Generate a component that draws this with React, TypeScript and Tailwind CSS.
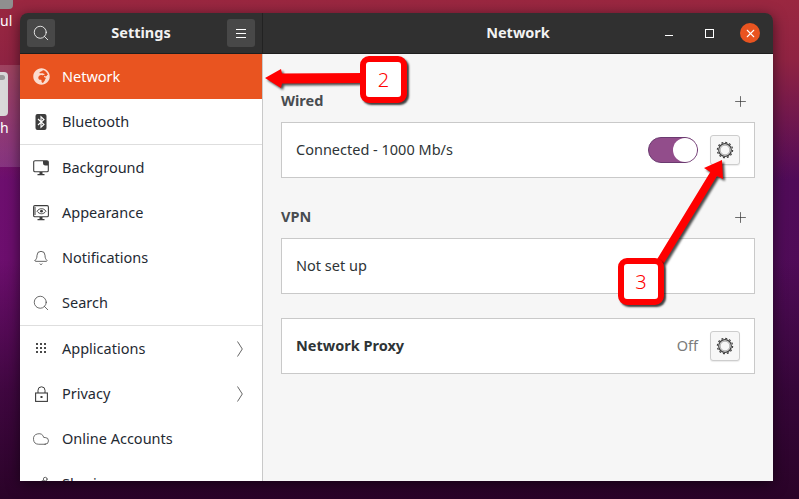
import { Bell, Cloud, Search, Share2, Plus, X } from 'lucide-react'
import { FaGlobeAfrica } from 'react-icons/fa'
import type { ReactNode } from 'react'

function BluetoothIcon() {
  return (
    <svg width="16" height="16" viewBox="0 0 16 16">
      <rect x="2.5" y="0" width="11" height="16" rx="2" fill="#3d3d3d" />
      <path d="M5 5l6 5.5L8 13.2V2.8l3 2.7L5 11" fill="none" stroke="#fff" strokeWidth="1.1" />
    </svg>
  )
}

function BackgroundIcon() {
  return (
    <svg width="16" height="16" viewBox="0 0 16 16">
      <path d="M2 .7h12A1.3 1.3 0 0 1 15.3 2v8.5a1.3 1.3 0 0 1-1.3 1.3H2A1.3 1.3 0 0 1 .7 10.5V2A1.3 1.3 0 0 1 2 .7z" fill="none" stroke="#3d3d3d" strokeWidth="1.1" />
      <path d="M10 1h4.5a.8.8 0 0 1 .8.8v3.7h-3a2.3 2.3 0 0 1-2.300-2.300z" fill="#3d3d3d" />
      <path d="M6.5 12h3v2h-3zM4.5 14h7v1.3h-7z" fill="#3d3d3d" />
    </svg>
  )
}

function AppearanceIcon() {
  return (
    <svg width="16" height="16" viewBox="0 0 16 16">
      <rect x=".6" y=".6" width="14.8" height="11.2" rx="1.3" fill="none" stroke="#3d3d3d" strokeWidth="1.1" />
      <path d="M1 3h2M1 5h2M1 7h2M1 9h2" stroke="#3d3d3d" strokeWidth="1" />
      <path d="M4 6.2c2.5-3.4 6.5-3.4 9 0-2.5 3.4-6.5 3.4-9 0z" fill="none" stroke="#3d3d3d" strokeWidth="0.9" />
      <circle cx="8.5" cy="6.2" r="1.4" fill="#3d3d3d" />
      <path d="M6.5 12h3v2h-3zM4.5 14h7v1.3h-7z" fill="#3d3d3d" />
    </svg>
  )
}

function GridIcon() {
  return (
    <svg width="11" height="11" viewBox="0 0 11 11" fill="#4a4a4a">
      {[0, 4, 8].map((y) =>
        [0, 4, 8].map((x) => <rect key={`${x}-${y}`} x={x} y={y} width="2" height="2" />),
      )}
    </svg>
  )
}

function LockIcon() {
  return (
    <svg width="13" height="16" viewBox="0 0 13 16">
      <path d="M3 7V4.3a3.5 3.5 0 0 1 7 0V7" fill="none" stroke="#3d3d3d" strokeWidth="1" />
      <rect x=".6" y="7" width="11.8" height="8.4" fill="none" stroke="#3d3d3d" strokeWidth="1.1" />
      <rect x="5.5" y="10" width="2" height="2" fill="#3d3d3d" />
    </svg>
  )
}

function Chevron() {
  return (
    <svg width="6" height="16" viewBox="0 0 6 16" className="ml-auto mr-[19px]">
      <path d="M.5.5L5.3 8 .5 15.5" fill="none" stroke="#555" strokeWidth="0.9" />
    </svg>
  )
}

function GearButton() {
  return (
    <div className="flex h-[30px] w-[30px] items-center justify-center rounded-[3px] border border-[#cdcdcd] bg-[#f7f7f7] shadow-[0_1px_1px_rgba(0,0,0,0.08)]">
      <svg width="18" height="18" viewBox="0 0 18 18" fill="none">
        <circle cx="9" cy="9" r="7.6" stroke="#3d3d3d" strokeWidth="1.2" strokeDasharray="2 1.98" />
        <circle cx="9" cy="9" r="6.3" stroke="#3d3d3d" strokeWidth="1.2" />
        <circle cx="9" cy="9" r="4.9" stroke="#a8a8a8" strokeWidth="1" />
      </svg>
    </div>
  )
}

function SidebarRow({ icon, label, active, chevron, divider }: { icon: ReactNode; label: string; active?: boolean; chevron?: boolean; divider?: boolean }) {
  return (
    <div
      className={`flex h-[45px] shrink-0 items-center text-[14.5px] ${active ? 'bg-[#e95420] text-white' : 'text-[#1f2a33]'} ${divider ? 'box-content border-b border-[#dedede]' : ''}`}
    >
      <div className="flex w-[42px] shrink-0 justify-center">{icon}</div>
      <span>{label}</span>
      {chevron ? <Chevron /> : null}
    </div>
  )
}

function Card({ children, top }: { children: ReactNode; top: string }) {
  return (
    <div className={`flex h-[56px] items-center border border-[#c9c9c9] bg-white pl-[14px] pr-[14px] text-[14.5px] text-[#2e3436] ${top}`}>
      {children}
    </div>
  )
}

function SectionHead({ label, top }: { label: string; top: string }) {
  return (
    <div className={`flex h-[18px] items-center justify-between pr-[6px] ${top}`}>
      <span className="text-[14.5px] font-bold text-[#484c50]">{label}</span>
      <Plus size={17} strokeWidth={1} color="#333" />
    </div>
  )
}

function Callout({ n, className }: { n: string; className: string }) {
  return (
    <div
      className={`absolute flex items-center justify-center rounded-[9px] border-[6px] border-[#ff0000] bg-white text-[20px] font-light text-[#ff0000] shadow-[2px_2px_2px_rgba(0,0,0,0.75)] ${className}`}
    >
      {n}
    </div>
  )
}

export default function App() {
  return (
    <div className="relative h-[499px] w-[799px] overflow-hidden bg-[linear-gradient(105deg,#6f0f70_0%,#640c66_30%,#560c5e_70%,#4d0b55_100%)] font-['Noto_Sans',sans-serif]">
      {/* wallpaper */}
      <div className="absolute inset-0 bg-[linear-gradient(180deg,#9a2740_0%,#8f2342_12%,rgba(125,25,90,0)_36%)]" />
      <div className="absolute inset-x-0 bottom-0 h-[240px] bg-[linear-gradient(180deg,rgba(40,3,40,0)_0%,rgba(40,3,40,0.65)_55%,#2a0328_100%)]" />

      {/* desktop icons peeking out on the left */}
      <div className="absolute left-0 top-0 h-[9px] w-[13px] rounded-br bg-[#8f8f8f]" />
      <div className="absolute left-0 top-[12px] text-[14px] leading-[18px] text-white">ul</div>
      <div className="absolute left-0 top-[65px] h-[102px] w-[20px] bg-white/15" />
      <div className="absolute left-0 top-[72px] h-[44px] w-[8px] rounded-r bg-[#d9d9d9]">
        <div className="mt-[3px] h-[5px] w-[5px] rounded-r-sm bg-[#9a9a9a]" />
      </div>
      <div className="absolute left-0 top-[119px] text-[14px] leading-[18px] text-white">h</div>

      {/* window */}
      <div className="absolute left-[20px] top-[13px] flex h-[468px] w-[753px] flex-col overflow-hidden rounded-t-[8px] shadow-[0_3px_14px_rgba(0,0,0,0.55)]">
        <div className="flex h-[41px] shrink-0 border-b border-[#1e1e1e] bg-[#303030] text-white">
          <div className="flex w-[243px] shrink-0 items-center justify-between border-r border-[#222] pl-[7px] pr-[7px]">
            <div className="flex h-[28px] w-[28px] items-center justify-center rounded-[3px] bg-[#484848]">
              <Search size={18} strokeWidth={1.1} />
            </div>
            <span className="text-[14.5px] font-bold text-[#f2f2f2]">Settings</span>
            <div className="flex h-[28px] w-[28px] flex-col items-center justify-center gap-[3px] rounded-[3px] bg-[#484848]">
              <div className="h-px w-[10px] bg-white" />
              <div className="h-px w-[10px] bg-white" />
              <div className="h-px w-[10px] bg-white" />
            </div>
          </div>
          <div className="relative flex flex-1 items-center justify-center">
            <span className="text-[14.5px] font-bold text-[#f2f2f2]">Network</span>
            <div className="absolute right-[13px] top-[10px] flex h-[20px] items-center">
              <div className="mr-[32px] mt-[5px] h-[1px] w-[8px] bg-white" />
              <div className="mr-[26px] h-[9px] w-[9px] border border-white" />
              <div className="flex h-[20px] w-[20px] items-center justify-center rounded-full bg-[#e95420]">
                <X size={13} strokeWidth={2} />
              </div>
            </div>
          </div>
        </div>

        <div className="flex min-h-0 flex-1">
          <div className="flex w-[243px] shrink-0 flex-col overflow-hidden border-r border-[#c9c9c9] bg-white">
            <SidebarRow active label="Network" icon={<FaGlobeAfrica size={17} color="#fbdccf" />} />
            <SidebarRow divider label="Bluetooth" icon={<BluetoothIcon />} />
            <SidebarRow label="Background" icon={<BackgroundIcon />} />
            <SidebarRow label="Appearance" icon={<AppearanceIcon />} />
            <SidebarRow label="Notifications" icon={<Bell size={16} strokeWidth={1.2} color="#3d3d3d" />} />
            <SidebarRow divider label="Search" icon={<Search size={18} strokeWidth={1} color="#3d3d3d" />} />
            <SidebarRow chevron label="Applications" icon={<GridIcon />} />
            <SidebarRow chevron label="Privacy" icon={<LockIcon />} />
            <SidebarRow label="Online Accounts" icon={<Cloud size={18} strokeWidth={1} color="#3d3d3d" />} />
            <SidebarRow label="Sharing" icon={<Share2 size={15} strokeWidth={1.2} color="#3d3d3d" />} />
          </div>

          <div className="flex-1 bg-[#f6f6f6] pl-[18px] pr-[18px]">
            <SectionHead label="Wired" top="mt-[38px]" />
            <Card top="mt-[12px]">
              <span>Connected - 1000 Mb/s</span>
              <div className="ml-auto mr-[12px] flex h-[26px] w-[50px] justify-end rounded-full border border-[#6b3a70] bg-[#924d8b]">
                <div className="h-[24px] w-[24px] rounded-full bg-white" />
              </div>
              <GearButton />
            </Card>
            <SectionHead label="VPN" top="mt-[30px]" />
            <Card top="mt-[12px]">
              <span>Not set up</span>
            </Card>
            <Card top="mt-[24px]">
              <span className="font-bold">Network Proxy</span>
              <span className="ml-auto mr-[12px] text-[#7b7b7b]">Off</span>
              <GearButton />
            </Card>
          </div>
        </div>
      </div>

      {/* annotations */}
      <svg width="799" height="499" viewBox="0 0 799 499" className="pointer-events-none absolute left-0 top-0 drop-shadow-[2px_2px_1px_rgba(0,0,0,0.7)]">
        <path d="M265 78L281 69L282 73.5L365 73L365 83L282 83.5L281 88Z" fill="#ff0000" />
        <path d="M722 160L723 179L717 176L663.4 264L656.6 260L710.3 172L704 168Z" fill="#ff0000" />
      </svg>
      <Callout n="2" className="left-[360px] top-[56px] h-[47px] w-[47px]" />
      <Callout n="3" className="left-[618px] top-[258px] h-[47px] w-[46px]" />
    </div>
  )
}
